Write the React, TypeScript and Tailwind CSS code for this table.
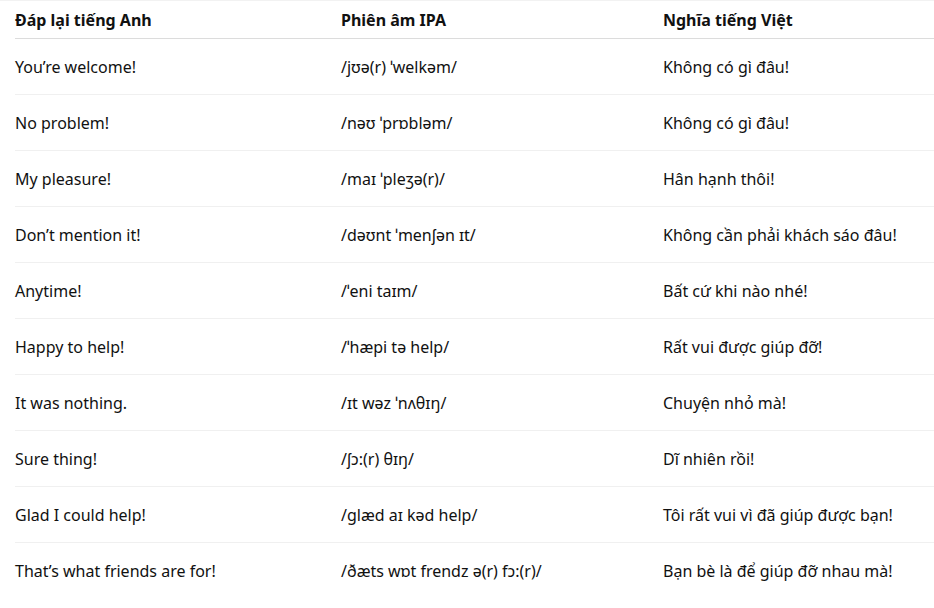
const rows = [
  ["You’re welcome!", "/jʊə(r) ˈwelkəm/", "Không có gì đâu!"],
  ["No problem!", "/nəʊ ˈprɒbləm/", "Không có gì đâu!"],
  ["My pleasure!", "/maɪ ˈpleʒə(r)/", "Hân hạnh thôi!"],
  ["Don’t mention it!", "/dəʊnt ˈmenʃən ɪt/", "Không cần phải khách sáo đâu!"],
  ["Anytime!", "/ˈeni taɪm/", "Bất cứ khi nào nhé!"],
  ["Happy to help!", "/ˈhæpi tə help/", "Rất vui được giúp đỡ!"],
  ["It was nothing.", "/ɪt wəz ˈnʌθɪŋ/", "Chuyện nhỏ mà!"],
  ["Sure thing!", "/ʃɔ:(r) θɪŋ/", "Dĩ nhiên rồi!"],
  ["Glad I could help!", "/glæd aɪ kəd help/", "Tôi rất vui vì đã giúp được bạn!"],
  ["That’s what friends are for!", "/ðæts wɒt frendz ə(r) fɔ:(r)/", "Bạn bè là để giúp đỡ nhau mà!"],
];

export default function App() {
  return (
    <div
      className="min-h-[608px] w-[934px] bg-white border-t border-[#f2f2f2] pl-[15px] text-[#111] text-[16px]"
      style={{ fontFamily: '"Noto Sans", "Open Sans", sans-serif' }}
    >
      <div className="grid grid-cols-[326px_322px_1fr] h-[38px] items-center border-b border-[#dcdcdc] font-bold">
        <div>Đáp lại tiếng Anh</div>
        <div>Phiên âm IPA</div>
        <div>Nghĩa tiếng Việt</div>
      </div>
      {rows.map((r, i) => (
        <div
          key={i}
          className={
            "grid grid-cols-[326px_322px_1fr] h-[56px] items-center " +
            (i < rows.length - 1 ? "border-b border-[#f0f0f0]" : "")
          }
        >
          <div>{r[0]}</div>
          <div>{r[1]}</div>
          <div>{r[2]}</div>
        </div>
      ))}
    </div>
  );
}
